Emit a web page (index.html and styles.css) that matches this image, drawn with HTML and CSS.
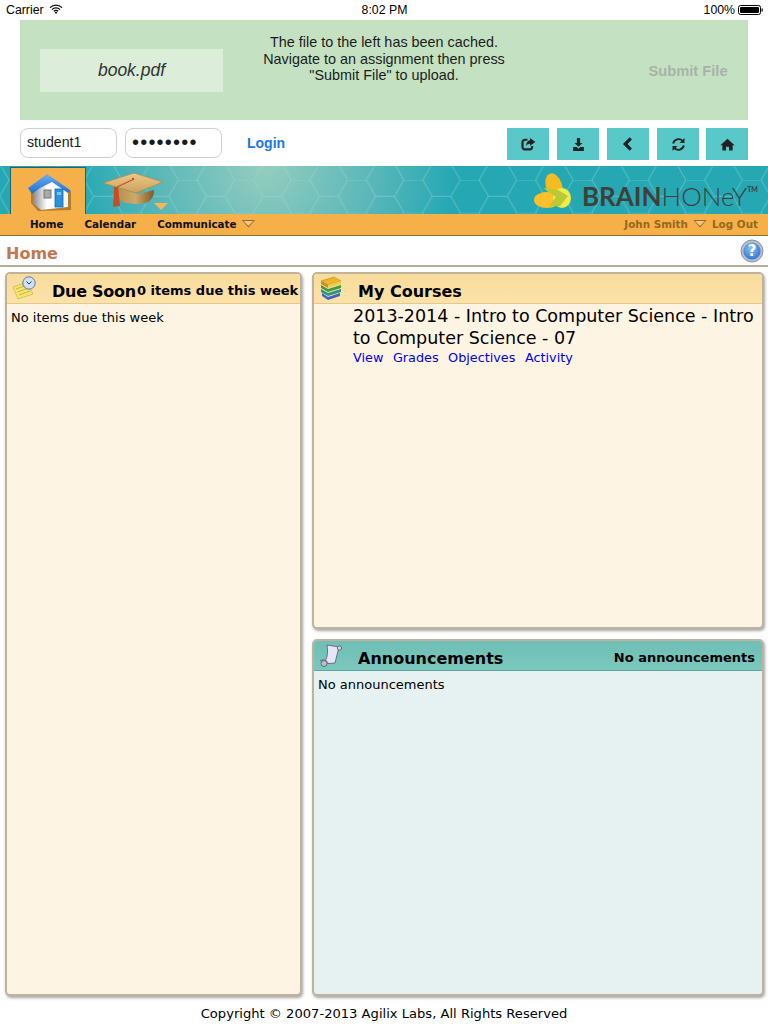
FILE: index.html
```html
<!DOCTYPE html>
<html lang="en">
<head>
<meta charset="utf-8">
<title>BrainHoney</title>
<link rel="stylesheet" href="styles.css">
</head>
<body>
<div class="status">
  <div class="status-left">Carrier
    <svg class="wifi" width="14" height="10" viewBox="0 0 14 10"><path d="M1 3.6a8.6 8.6 0 0 1 12 0M3 5.6a5.7 5.7 0 0 1 8 0M4.9 7.4a3 3 0 0 1 4.2 0" fill="none" stroke="#000" stroke-width="1.3"/><path d="M7 10 5.7 8.4a2 2 0 0 1 2.6 0z"/></svg>
  </div>
  <div class="status-time">8:02 PM</div>
  <div class="status-right">100%
    <svg width="25" height="10" viewBox="0 0 25 10"><rect x=".5" y=".5" width="22" height="9" rx="2" fill="none" stroke="#000"/><rect x="2" y="2" width="19" height="6" rx="1"/><rect x="23.5" y="3.5" width="1.2" height="3"/></svg>
  </div>
</div>

<section class="banner">
  <div class="file-box">book.pdf</div>
  <p class="banner-msg">The file to the left has been cached.<br>Navigate to an assignment then press<br>"Submit File" to upload.</p>
  <div class="submit">Submit File</div>
</section>

<div class="login-row">
  <input class="field" type="text" value="student1" aria-label="User">
  <input class="field field-pw" type="password" value="password" aria-label="Password">
  <a class="login">Login</a>
  <div class="tools">
    <a class="tool"><svg width="15" height="15" viewBox="0 0 14 14"><path d="M6 2.6H3.6A2.2 2.2 0 0 0 1.4 4.8v4.6a2.2 2.2 0 0 0 2.2 2.2h4.6a2.2 2.2 0 0 0 2.2-2.2V8.4" fill="none" stroke="#222" stroke-width="2"/><path d="M8.4 1 13.4 4.6 8.4 8.2V6.2C6.8 6.2 5.6 6.8 4.8 8.4 4.8 5.4 6.2 3.3 8.4 3z" fill="#222"/></svg></a>
    <a class="tool"><svg width="15" height="15" viewBox="0 0 14 14"><path d="M5.5 1H8.5V5.5H10.7L7 9.2 3.3 5.5H5.5z" fill="#222"/><path d="M2 9.4H5.2L7 11 8.8 9.4H12V13H2z" fill="#222"/></svg></a>
    <a class="tool"><svg width="14" height="14" viewBox="0 0 14 14"><path d="M9.8 1.4 4.2 7 9.8 12.6" fill="none" stroke="#222" stroke-width="3.2"/></svg></a>
    <a class="tool"><svg width="15" height="15" viewBox="0 0 14 14"><path d="M2 6A5.2 5.2 0 0 1 10.8 3.6M12 8A5.2 5.2 0 0 1 3.2 10.4" fill="none" stroke="#222" stroke-width="1.8"/><path d="M12.6 1V5.6H8zM1.4 13V8.4H6z" fill="#222"/></svg></a>
    <a class="tool tool-last"><svg width="15" height="15" viewBox="0 0 14 14"><path d="M7 1.6 13.6 7.6H11.8V12.6H8.4V9H5.6V12.6H2.2V7.6H.4z" fill="#222"/></svg></a>
  </div>
</div>

<header class="site-header">
  <div class="band">
    <svg class="hex" width="768" height="48" aria-hidden="true">
      <defs>
        <radialGradient id="glow" gradientUnits="userSpaceOnUse" cx="265" cy="0" r="190">
          <stop offset="0" stop-color="#95cdbf"/>
          <stop offset=".55" stop-color="#5cb8b9"/>
          <stop offset="1" stop-color="#25a8b4"/>
        </radialGradient>
        <pattern id="cells" width="56.4" height="32.6" patternUnits="userSpaceOnUse" patternTransform="translate(178.3 14)">
          <path d="M0 0H18.8L28.2 16.3H47L56.4 0M18.8 32.6 28.2 16.3M47 16.3 56.4 32.6" fill="none" stroke="#a6d8d6" stroke-opacity=".42" stroke-width="1"/>
        </pattern>
      </defs>
      <rect width="768" height="48" fill="#25a8b4"/>
      <rect width="768" height="48" fill="url(#glow)"/>
      <rect width="768" height="48" fill="url(#cells)"/>
    </svg>
    <div class="tab-home">
      <svg width="44" height="38" viewBox="0 0 44 38">
        <defs>
          <linearGradient id="wall" x1="0" x2="1"><stop offset="0" stop-color="#8a8a8a"/><stop offset=".28" stop-color="#dcdcdc"/><stop offset=".4" stop-color="#fff"/><stop offset="1" stop-color="#f4f4f4"/></linearGradient>
          <linearGradient id="roof" x1="0" x2="0" y1="0" y2="1"><stop offset="0" stop-color="#6bb0ee"/><stop offset="1" stop-color="#1c6cd6"/></linearGradient>
        </defs>
        <path d="M3 15 23 3 43 17V36L10 37 3 29z" fill="#6e4a14" opacity=".5"/>
        <path d="M5 15V29L13 36 40 33V17L24 6z" fill="url(#wall)"/>
        <path d="M0 14 19 0 42 16 40 19 24 8 12 14 4 20z" fill="url(#roof)"/>
        <rect x="16" y="16" width="7" height="8" fill="#a9a9a9" stroke="#777"/>
        <rect x="27" y="15" width="8" height="18" fill="#2a92dc" stroke="#1565b0" stroke-width=".8"/>
        <rect x="29" y="18" width="4" height="3" fill="#7fc4f0"/>
      </svg>
    </div>
    <div class="tab-cap">
      <svg width="62" height="36" viewBox="0 0 62 36">
        <defs>
          <linearGradient id="board" x1="0" x2="0" y1="0" y2="1"><stop offset="0" stop-color="#ecc98a"/><stop offset="1" stop-color="#cda05c"/></linearGradient>
          <linearGradient id="base" x1="0" x2="1"><stop offset="0" stop-color="#b48f50"/><stop offset=".5" stop-color="#cfa968"/><stop offset="1" stop-color="#7d5a28"/></linearGradient>
        </defs>
        <path d="M15 14C14 28 20 31 36 31 46 31 52 27 52 17L36 21z" fill="url(#base)"/>
        <path d="M1 10 32 0 61 9 34 20z" fill="url(#board)" stroke="#a8823f" stroke-width=".6"/>
        <path d="M32 6 15 14" stroke="#c2502a" stroke-width="1.2"/>
        <circle cx="31" cy="6" r="1.2" fill="#c2502a"/>
        <path d="M12 14H16L18 33 11 34z" fill="#c84d20"/>
      </svg>
      <span class="cap-arrow"></span>
    </div>
    <div class="logo">
      <svg width="40" height="38" viewBox="0 0 40 38">
        <ellipse cx="20" cy="13" rx="8" ry="13" fill="#f7bb22" transform="rotate(-18 20 13)"/>
        <ellipse cx="13" cy="27" rx="13" ry="8" fill="#fbc02a"/>
        <ellipse cx="28" cy="25" rx="9" ry="10" fill="#f3ec46"/>
        <path d="M9 15 24 17 34 23 26 33 15 33 22 24z" fill="#b9c937"/>
      </svg>
      <span class="logo-text"><b>BRAIN</b>HONeY<sup>TM</sup></span>
    </div>
  </div>
  <nav class="nav">
    <a class="nav-item nav-home">Home</a>
    <a class="nav-item nav-cal">Calendar</a>
    <a class="nav-item nav-comm">Communicate</a>
    <span class="tri tri-comm"></span>
    <div class="nav-user">
      <span>John Smith</span>
      <span class="tri"></span>
      <span>Log Out</span>
    </div>
  </nav>
</header>

<div class="page-title">
  <h1>Home</h1>
  <svg width="24" height="24" viewBox="0 0 24 24">
    <defs><radialGradient id="q" cx=".45" cy=".35" r=".7"><stop offset="0" stop-color="#8ec2f5"/><stop offset="1" stop-color="#2a6fd0"/></radialGradient></defs>
    <circle cx="12" cy="12" r="11" fill="#b9bfc9" stroke="#8b93a1"/>
    <circle cx="12" cy="12" r="8.6" fill="url(#q)"/>
    <text x="12" y="17" text-anchor="middle" class="q-mark">?</text>
  </svg>
</div>

<main class="panels">
  <section class="panel panel-due">
    <div class="panel-head">
      <svg class="panel-icon" width="26" height="24" viewBox="0 0 26 24"><path d="M1 11 15 6 21 18 6 23z" fill="#f6e46e" stroke="#c9b446" stroke-width=".7"/><path d="M4 13 15 9M5.5 16 16.5 12M7 19 18 15" stroke="#b9a63c" stroke-width=".8"/><circle cx="17" cy="7" r="6.2" fill="#cfe0f2" stroke="#5a78a8"/><path d="M14.5 5.5 17 8 19.5 5.5" fill="none" stroke="#2d3f66" stroke-width="1"/></svg>
      <h2 class="panel-title title-due">Due Soon</h2>
      <span class="panel-note note-due">0 items due this week</span>
    </div>
    <div class="panel-body"><p class="plain">No items due this week</p></div>
  </section>

  <section class="panel panel-courses">
    <div class="panel-head">
      <svg class="panel-icon" width="24" height="24" viewBox="0 0 24 24"><path d="M2 5 15 1 22 5 9 9z" fill="#e9b62c" stroke="#a97f14" stroke-width=".5"/><path d="M2 5 9 9V12L2 8z" fill="#c69217"/><path d="M9 9 22 5V8L9 12z" fill="#f3cb4e"/><path d="M2 9 9 13 22 9V12L9 16 2 12z" fill="#3d9c3f"/><path d="M2 13 9 17 22 13V16L9 20 2 16z" fill="#2f8f8a"/><path d="M3 17 9 21 21 17V20L9 24 3 20z" fill="#3869c0"/></svg>
      <h2 class="panel-title">My Courses</h2>
    </div>
    <div class="panel-body course">
      <div class="course-name">2013-2014 - Intro to Computer Science - Intro to Computer Science - 07</div>
      <div class="course-links"><a>View</a><a>Grades</a><a>Objectives</a><a>Activity</a></div>
    </div>
  </section>

  <section class="panel panel-news">
    <div class="panel-head">
      <svg class="panel-icon" width="24" height="24" viewBox="0 0 24 24"><path d="M8 2 20 4 16 20 4 21C9 16 9 8 8 2z" fill="#e8e6f2" stroke="#55586a" stroke-width=".8"/><circle cx="20.5" cy="5" r="2.2" fill="#cfcfe0" stroke="#55586a" stroke-width=".8"/><circle cx="5" cy="20.5" r="3" fill="#bdbdd0" stroke="#55586a" stroke-width=".8"/><path d="M1 18C3 16 8 17 9 20" fill="none" stroke="#55586a" stroke-width=".8"/></svg>
      <h2 class="panel-title">Announcements</h2>
      <span class="panel-note">No announcements</span>
    </div>
    <div class="panel-body"><p class="plain">No announcements</p></div>
  </section>
</main>

<footer class="copyright">Copyright © 2007-2013 Agilix Labs, All Rights Reserved</footer>
</body>
</html>
```

FILE: styles.css
```css
* { box-sizing: border-box; }
html, body { margin: 0; padding: 0; }
body {
  width: 768px;
  height: 1024px;
  overflow: hidden;
  background: #fff;
  color: #000;
  font-family: "DejaVu Sans", Verdana, sans-serif;
}
a { text-decoration: none; }

/* iOS status bar */
.status {
  height: 20px;
  padding: 0 5px 0 6px;
  display: grid;
  grid-template-columns: 1fr auto 1fr;
  align-items: center;
  font: 12.3px "Liberation Sans", Arial, sans-serif;
}
.status-left { display: flex; align-items: center; gap: 5px; }
.status-right { display: flex; align-items: center; justify-content: flex-end; gap: 3px; }
.wifi { margin-top: -2px; }

/* cached-file banner */
.banner {
  height: 100px;
  margin: 0 20px;
  padding: 0 0 0 20px;
  background: #c4e2c2;
  display: flex;
  align-items: flex-start;
  font-family: "Liberation Sans", Arial, sans-serif;
}
.file-box {
  width: 183px;
  height: 43px;
  margin-top: 29px;
  background: #dcedd9;
  display: flex;
  align-items: center;
  justify-content: center;
  font-size: 17.5px;
  font-style: italic;
  color: #333;
}
.banner-msg {
  width: 282px;
  margin: 14px 0 0 20px;
  text-align: center;
  font-size: 14.4px;
  line-height: 16.5px;
  color: #1c1c1c;
}
.submit {
  margin-left: auto;
  width: 120px;
  padding-top: 43px;
  text-align: center;
  font-size: 14.7px;
  font-weight: 700;
  color: #a9b2a8;
}

/* login and toolbar */
.login-row {
  height: 32px;
  margin: 8px 20px 0;
  display: flex;
  align-items: flex-start;
}
.field {
  width: 97px;
  height: 30px;
  margin: 0 8px 0 0;
  padding: 0 6px 2px;
  border: 1px solid #cfcfcf;
  border-radius: 8px;
  background: #fff;
  font: 14.2px "Liberation Sans", Arial, sans-serif;
  color: #1a1a1a;
  outline: none;
}
.field-pw { font-size: 20px; letter-spacing: 1.2px; }
.login {
  margin-left: 17px;
  font: 700 14px/30px "Liberation Sans", Arial, sans-serif;
  color: #1b76e6;
}
.tools { margin-left: auto; display: flex; gap: 8px; }
.tool {
  width: 42px;
  height: 32px;
  background: #58c8c8;
  display: flex;
  align-items: center;
  justify-content: center;
}
.tool-last { margin-left: -1px; }

/* site header */
.site-header { margin-top: 6px; }
.band {
  position: relative;
  height: 48px;
  display: flex;
  align-items: flex-end;
  padding-left: 10px;
  border-bottom: 1px solid #1d666c;
}
.hex { position: absolute; left: 0; top: 0; }
.tab-home {
  position: relative;
  width: 76px;
  height: 47px;
  margin-bottom: -1px;
  background: #f5b04a;
  border: 1px solid #1d666c;
  border-bottom: 0;
  display: flex;
  justify-content: center;
  padding: 6px 0 0 4px;
}
.tab-cap {
  position: relative;
  width: 62px;
  height: 37px;
  margin: 0 0 3px 16px;
}
.cap-arrow {
  position: absolute;
  right: -4px;
  bottom: 0;
  width: 0;
  height: 0;
  border-left: 7px solid transparent;
  border-right: 7px solid transparent;
  border-top: 7px solid #f7b556;
}
.logo {
  position: relative;
  margin-left: auto;
  height: 40px;
  padding-right: 10px;
  margin-bottom: 2px;
  display: flex;
  align-items: flex-end;
  gap: 8px;
}
.logo-text {
  font: 300 26px/30px Lato, "Open Sans", sans-serif;
  color: #3f3f3b;
}
.logo-text b { font-weight: 700; }
.logo-text sup { font-size: 7px; font-weight: 700; vertical-align: 14px; line-height: 0; }

.nav {
  height: 22px;
  padding-bottom: 2px;
  background: #f5b04a;
  border-bottom: 1px solid #8c6a33;
  display: flex;
  align-items: center;
  font-size: 10.3px;
  font-weight: 700;
}
.nav-item { color: #111; }
.nav-home { margin-left: 30px; }
.nav-cal { margin-left: 21px; }
.nav-comm { margin-left: 21px; }
.tri {
  position: relative;
  display: inline-block;
  width: 14px;
  height: 8px;
  clip-path: polygon(0 0, 100% 0, 50% 100%);
  background: #8c6a33;
}
.tri::after {
  content: "";
  position: absolute;
  left: 1.6px;
  top: 1px;
  width: 10.8px;
  height: 5.6px;
  clip-path: polygon(0 0, 100% 0, 50% 100%);
  background: #f8c67a;
}
.tri-comm { margin-left: 5px; }
.nav-user {
  margin-left: auto;
  padding-right: 10px;
  display: flex;
  align-items: center;
  gap: 5px;
  font-size: 10.4px;
  color: #97671c;
}

/* page title */
.page-title {
  height: 31px;
  padding: 3px 4px 0 6px;
  border-bottom: 2px solid #b8ad9a;
  display: flex;
  justify-content: space-between;
  align-items: flex-start;
}
.page-title h1 {
  margin: 5px 0 0;
  font-size: 16px;
  line-height: 20px;
  font-weight: 700;
  color: #c2774c;
}
.q-mark { font: 700 15px "DejaVu Sans", sans-serif; fill: #fff; }

/* panels */
.panels {
  margin: 5px 0 0 5px;
  display: grid;
  grid-template-columns: 297px 452px;
  grid-template-rows: 357px 357px;
  column-gap: 10px;
  row-gap: 10px;
}
.panel {
  display: flex;
  flex-direction: column;
  border: 2px solid #bfb39b;
  border-radius: 5px;
  overflow: hidden;
  background: #fdf4e3;
  box-shadow: 1px 2px 3px rgba(0, 0, 0, .35);
}
.panel-due { grid-row: 1 / span 2; }
.panel-head {
  flex: none;
  height: 30px;
  display: flex;
  align-items: center;
  padding-right: 7px;
  background: linear-gradient(#f8dc9c, #fbe2a8);
  border-bottom: 1px solid #e3c98d;
}
.panel-icon { flex: none; margin: -2px 0 0 5px; }
.panel-title {
  margin: 6px 0 0 15px;
  font-size: 16px;
  font-weight: 700;
  line-height: 20px;
  white-space: nowrap;
}
.title-due { margin-left: 14px; letter-spacing: -.25px; }
.panel-note {
  margin-left: auto;
  padding-top: 4px;
  font-size: 13px;
  font-weight: 700;
  white-space: nowrap;
}
.note-due { margin-left: 1px; }
.panel-due .panel-head { padding-right: 0; }
.panel-body { flex: 1; padding: 6px 4px; }
.plain { margin: 0; font-size: 13px; line-height: 16px; }

.course { padding: 1px 5px 0 39px; }
.course-name { font-size: 17.5px; line-height: 22px; }
.course-links { margin-top: 1px; display: flex; gap: 9.5px; font-size: 12.8px; line-height: 16px; }
.course-links a { color: #0000ee; }

.panel-news { background: #e5f2f1; }
.panel-news .panel-head {
  background: linear-gradient(#6fbfb6, #7ac8be);
  border-bottom: 1px solid #5ba69d;
}

.copyright {
  margin-top: 10px;
  text-align: center;
  font-size: 13.1px;
  line-height: 16px;
}
```
